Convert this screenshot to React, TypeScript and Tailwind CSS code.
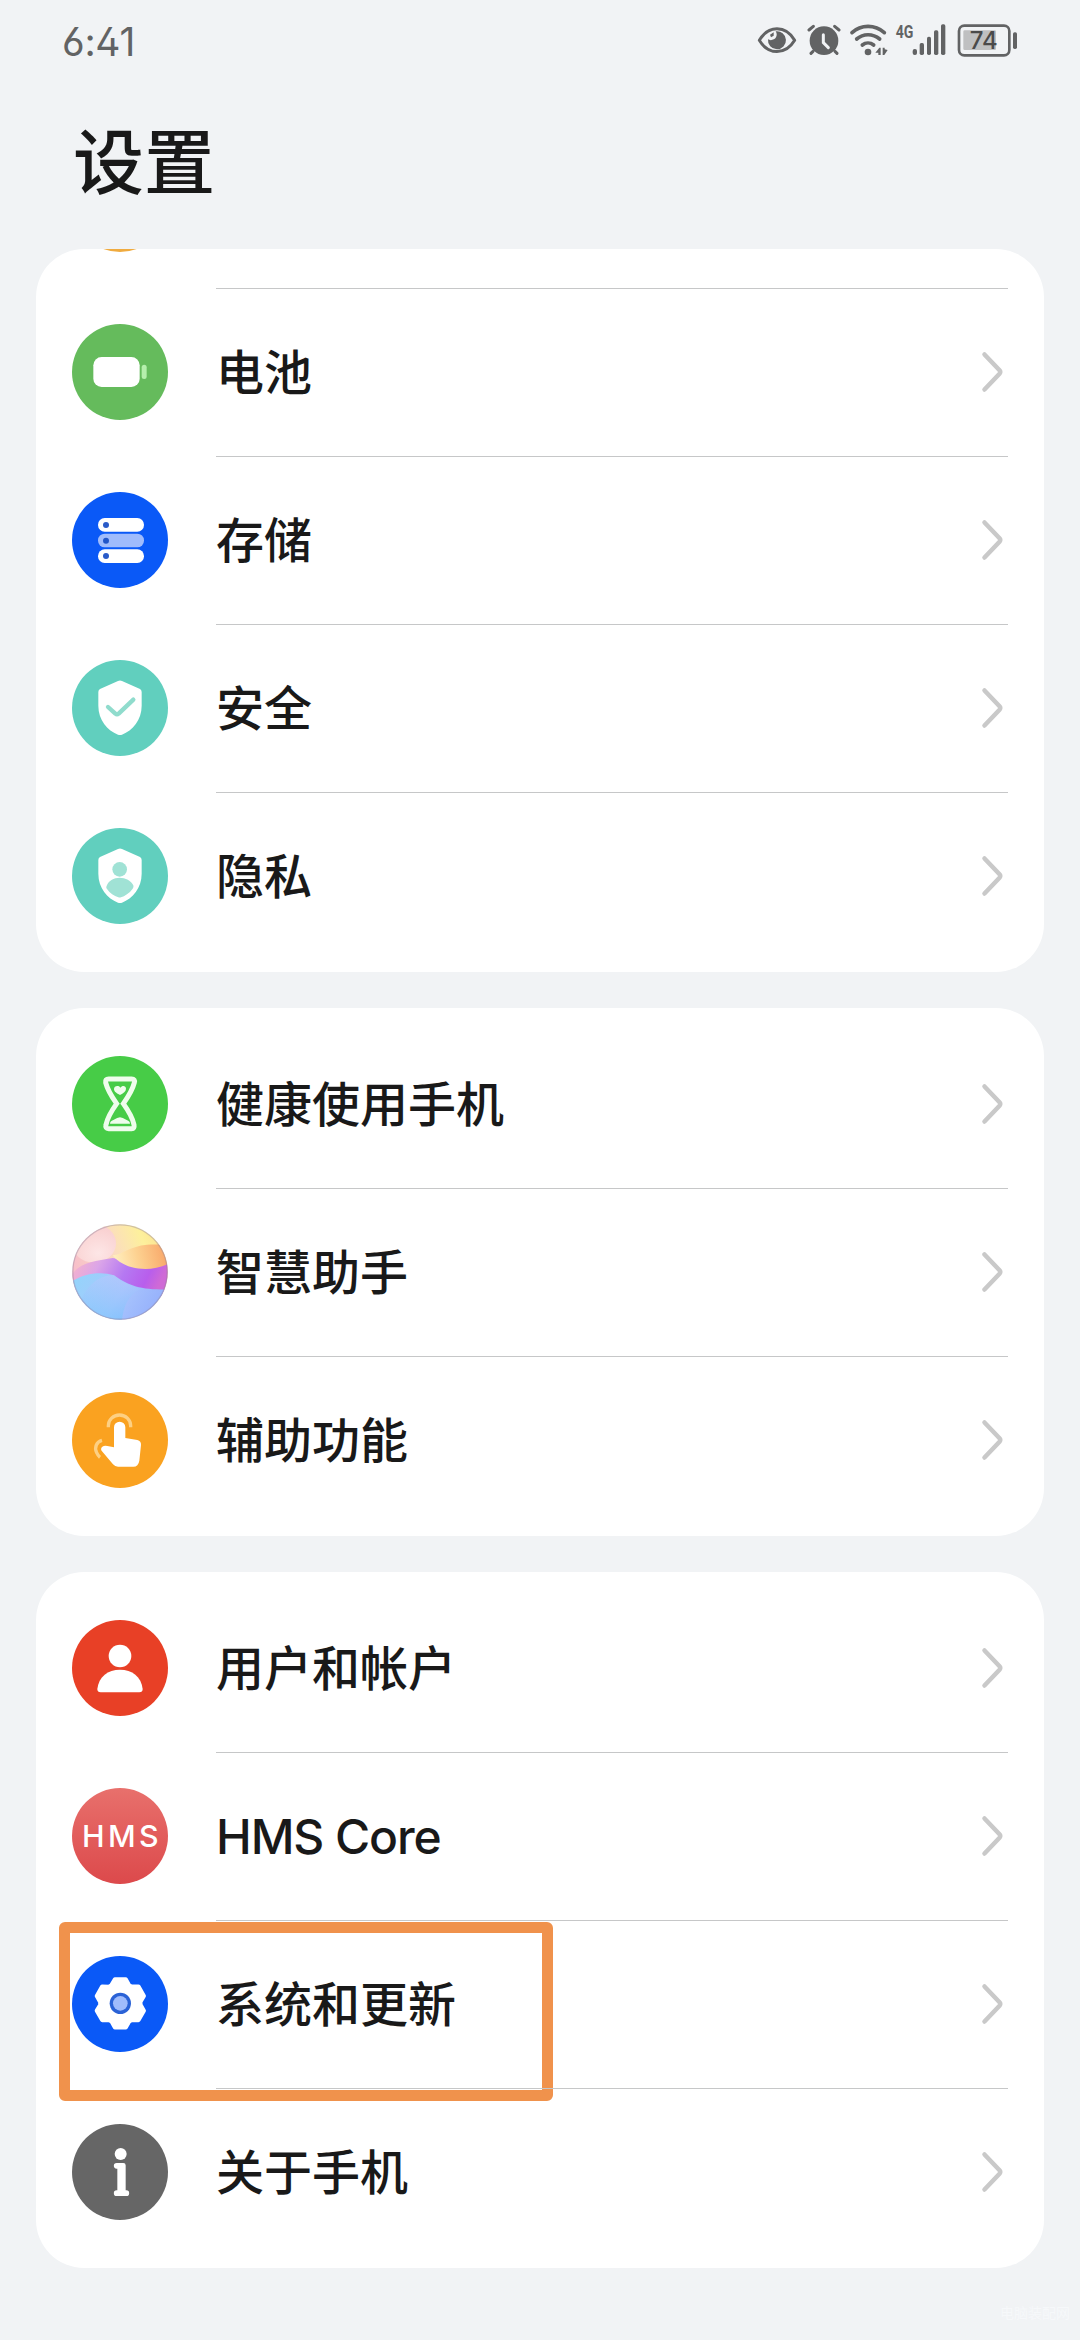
import React, { FC, ReactNode } from "react";

interface SettingItem {
  label: string;
  icon: ReactNode;
  highlight?: boolean;
}

const SHIELD =
  "M138 63 Q144 60 150 63 L204 87 Q209 90 209 96 V137 C209 180 182 211 150 224 Q144 226 138 224 C106 211 79 180 79 137 V96 Q79 90 84 87 Z";

const RoundIcon: FC<{ color: string; children?: ReactNode }> = ({
  color,
  children,
}) => (
  <svg viewBox="0 0 288 288" className="h-24 w-24 shrink-0">
    <circle cx="144" cy="144" r="144" fill={color} />
    {children}
  </svg>
);

const BatteryIcon = () => (
  <RoundIcon color="#65bb5c">
    <rect x="64" y="99" width="139" height="90" rx="25" fill="#fff" />
    <rect x="209" y="122" width="15" height="43" rx="7.5" fill="#b5efac" />
  </RoundIcon>
);

const StorageIcon = () => (
  <RoundIcon color="#0a59f7">
    <rect x="78" y="78" width="138" height="41" rx="20" fill="#fff" />
    <rect x="78" y="125" width="138" height="41" rx="20" fill="#a0bcfc" />
    <rect x="78" y="172" width="138" height="41" rx="20" fill="#fff" />
    <circle cx="102" cy="99" r="9" fill="#2a5bc8" />
    <circle cx="102" cy="146" r="9" fill="#2156c9" />
    <circle cx="102" cy="192" r="9" fill="#2a5bc8" />
  </RoundIcon>
);

const SecurityIcon = () => (
  <RoundIcon color="#61cfbe">
    <path d={SHIELD} fill="#fff" />
    <path
      d="M108 141 L130 161 Q135 165 140 161 L184 119"
      fill="none"
      stroke="#90dccd"
      strokeWidth="13"
      strokeLinecap="round"
      strokeLinejoin="round"
    />
  </RoundIcon>
);

const PrivacyIcon = () => (
  <RoundIcon color="#61cfbe">
    <path d={SHIELD} fill="#fff" />
    <circle cx="143" cy="124" r="22" fill="#a0e2d5" />
    <path
      d="M103 176 C108 158 126 149 143 149 S178 158 184 172 Q186 177 182 182 C172 196 158 204 147 208 Q143 209 139 208 C126 204 114 196 105 183 Q102 180 103 176 Z"
      fill="#a0e2d5"
    />
  </RoundIcon>
);

const HourglassIcon = () => (
  <RoundIcon color="#47cc47">
    <path
      d="M110 69 H179 Q190 69 187 80 C181 104 169 122 154 143 C169 164 181 182 186 206 Q188 218 179 218 H110 Q99 218 102 206 C107 182 119 164 134 143 C119 122 107 104 101 80 Q99 69 110 69 Z"
      fill="none"
      stroke="#effdec"
      strokeWidth="15"
    />
    <path
      d="M144 117 C134 112 126 107 126 99 C126 90 139 87 145 95 C151 87 162 89 162 98 C162 106 154 112 144 117 Z"
      fill="#effdec"
    />
    <path
      d="M114 203 Q114 196 124 192 Q137 184 144 184 T164 192 Q174 196 174 203 Z"
      fill="#effdec"
    />
  </RoundIcon>
);

const AssistantIcon = () => (
  <svg viewBox="0 0 288 288" className="h-24 w-24 shrink-0">
    <defs>
      <clipPath id="orb">
        <circle cx="144" cy="144" r="143" />
      </clipPath>
      <linearGradient id="orbTop" x1="0" y1="0.5" x2="1" y2="0.1">
        <stop offset="0" stopColor="#f7bccb" />
        <stop offset="0.45" stopColor="#fbdcc0" />
        <stop offset="0.75" stopColor="#fdf09c" />
        <stop offset="1" stopColor="#fbdb8c" />
      </linearGradient>
      <radialGradient id="orbPink" cx="0.6" cy="0.75" r="0.7">
        <stop offset="0" stopColor="#fde6e6" />
        <stop offset="1" stopColor="#f9cfcf" />
      </radialGradient>
      <linearGradient id="orbOrange" x1="0" y1="0.5" x2="1" y2="0.4">
        <stop offset="0" stopColor="#fff0c0" />
        <stop offset="0.45" stopColor="#fdd190" />
        <stop offset="1" stopColor="#f8a567" />
      </linearGradient>
      <linearGradient id="orbBand" x1="0" y1="0" x2="1" y2="0.2">
        <stop offset="0" stopColor="#f9b4c8" />
        <stop offset="0.3" stopColor="#dba5e8" />
        <stop offset="0.6" stopColor="#b578f2" />
        <stop offset="0.85" stopColor="#b85eec" />
        <stop offset="1" stopColor="#cf6ad6" />
      </linearGradient>
      <linearGradient id="orbBlue" x1="0" y1="0.3" x2="1" y2="0.6">
        <stop offset="0" stopColor="#96d3fb" />
        <stop offset="0.5" stopColor="#a9c6fd" />
        <stop offset="1" stopColor="#93adfc" />
      </linearGradient>
      <linearGradient id="orbFade" x1="0" y1="0" x2="0" y2="1">
        <stop offset="0" stopColor="#c3c4fd" stopOpacity="0.7" />
        <stop offset="1" stopColor="#66c8fd" stopOpacity="0.8" />
      </linearGradient>
    </defs>
    <g clipPath="url(#orb)">
      <rect width="288" height="288" fill="url(#orbTop)" />
      <ellipse cx="66" cy="58" rx="66" ry="58" fill="url(#orbPink)" />
      <path
        d="M0 150 C30 112 70 112 122 102 C170 108 220 132 288 116 V220 H0 Z"
        fill="url(#orbBand)"
      />
      <path
        d="M122 94 C150 92 175 66 225 62 C255 60 275 62 288 66 V120 C250 138 210 138 180 130 C150 122 130 106 122 94 Z"
        fill="url(#orbOrange)"
      />
      <path
        d="M0 172 C40 146 90 142 126 154 C165 182 205 200 288 196 V288 H0 Z"
        fill="url(#orbBlue)"
      />
      <path
        d="M126 154 C150 176 180 190 206 194 C165 215 155 250 150 288 H20 C10 230 60 150 126 154 Z"
        fill="url(#orbFade)"
        opacity="0.55"
      />
    </g>
    <circle
      cx="144"
      cy="144"
      r="141.5"
      fill="none"
      stroke="#8f7f9a"
      strokeOpacity="0.4"
      strokeWidth="4"
    />
  </svg>
);

const TouchIcon = () => (
  <RoundIcon color="#faa220">
    <path
      d="M126 106 A17 17 0 0 1 160 106 V138 L196 144 Q208 147 207 159 L202 206 Q199 224 184 224 H138 Q129 224 123 217 L90 178 Q84 170 91 164 Q97 160 106 162 L126 166 Z"
      fill="#fff"
    />
    <path
      d="M109 106 V101 A33.5 32 0 0 1 176 101 V106"
      fill="none"
      stroke="#fdd083"
      strokeWidth="10"
    />
    <path
      d="M90 145 C74 149 66 166 74 182 C77 189 80 193 84 196"
      fill="none"
      stroke="#fdd083"
      strokeWidth="10"
    />
  </RoundIcon>
);

const UserIcon = () => (
  <RoundIcon color="#e84026">
    <circle cx="144" cy="108" r="34" fill="#fff" />
    <path
      d="M76 207 C80 170 108 149 144 149 S208 170 212 207 Q212 217 202 217 H86 Q76 217 76 207 Z"
      fill="#fff"
    />
  </RoundIcon>
);

const HmsIcon = () => (
  <RoundIcon color="url(#hms)">
    <defs>
      <linearGradient id="hms" x1="0" y1="0" x2="0" y2="1">
        <stop offset="0" stopColor="#e8706c" />
        <stop offset="1" stopColor="#dc494b" />
      </linearGradient>
    </defs>
    <text
      x="30"
      y="178"
      textLength="230"
      fontSize="91"
      fontWeight="500"
      fill="#fff"
      className="font-['Inter',sans-serif]"
    >
      HMS
    </text>
  </RoundIcon>
);

const gearPoints = Array.from({ length: 6 })
  .flatMap((_, i) => {
    const a = (i * Math.PI) / 3;
    return [
      [-16, -72],
      [16, -72],
      [26, -54],
      [34, -50],
    ].map(
      ([x, y]) =>
        `${(x * Math.cos(a) - y * Math.sin(a)).toFixed(1)},${(
          x * Math.sin(a) +
          y * Math.cos(a)
        ).toFixed(1)}`
    );
  })
  .join(" ");

const SystemIcon = () => (
  <RoundIcon color="#0a59f7">
    <g transform="translate(145 142)">
      <polygon
        points={gearPoints}
        fill="#fff"
        stroke="#fff"
        strokeWidth="13"
        strokeLinejoin="round"
      />
      <circle r="32" fill="#2a62d6" />
      <circle r="22" fill="#a0bcfc" />
    </g>
  </RoundIcon>
);

const InfoIcon = () => (
  <RoundIcon color="#666666">
    <circle cx="146" cy="90" r="18" fill="#fff" />
    <path
      d="M134 117 H154 Q161 117 161 124 V199 H163 A8.5 8.5 0 0 1 163 216 H134 A8.5 8.5 0 0 1 134 199 H136 V134 H134 A8.5 8.5 0 0 1 134 117 Z"
      fill="#fff"
    />
  </RoundIcon>
);

const groups: SettingItem[][] = [
  [
    { label: "电池", icon: <BatteryIcon /> },
    { label: "存储", icon: <StorageIcon /> },
    { label: "安全", icon: <SecurityIcon /> },
    { label: "隐私", icon: <PrivacyIcon /> },
  ],
  [
    { label: "健康使用手机", icon: <HourglassIcon /> },
    { label: "智慧助手", icon: <AssistantIcon /> },
    { label: "辅助功能", icon: <TouchIcon /> },
  ],
  [
    { label: "用户和帐户", icon: <UserIcon /> },
    { label: "HMS Core", icon: <HmsIcon /> },
    { label: "系统和更新", icon: <SystemIcon />, highlight: true },
    { label: "关于手机", icon: <InfoIcon /> },
  ],
];

const StatusBar = () => (
  <header className="flex h-20 items-center justify-between pl-[62px] pr-[61px] text-[#626364]">
    <span className="pt-[3px] font-['Inter',sans-serif] text-[39px] leading-none tracking-[-0.3px] [font-feature-settings:'ss01']">
      6:41
    </span>
    <div className="flex">
      <svg viewBox="48 39 120 102" className="h-[34px] w-10">
        <path
          d="M55 91 C82 45 134 45 161 91 C134 136 82 136 55 91 Z"
          fill="none"
          stroke="currentColor"
          strokeWidth="9"
          strokeLinejoin="round"
        />
        <path
          d="M104 64 A27 27 0 1 1 81 88 C88 93 101 90 105 82 C108 76 108 70 104 64 Z"
          fill="currentColor"
        />
        <path d="M87 74 L98 67 L98 77 L90 82 Z" fill="currentColor" />
      </svg>
      <svg viewBox="198 39 102 102" className="ml-2.5 h-[34px] w-[34px]">
        <circle cx="249" cy="92" r="43" fill="currentColor" />
        <path
          d="M204 60 L217 49 M281 49 L294 60 M216 124 L210 130 M282 124 L288 130"
          stroke="currentColor"
          strokeWidth="9"
          strokeLinecap="round"
        />
        <path
          d="M247 74 V98 L262 113"
          fill="none"
          stroke="#f1f3f5"
          strokeWidth="9"
          strokeLinecap="round"
        />
      </svg>
      <svg viewBox="324 39 120 102" className="ml-2 h-[34px] w-10">
        <g
          fill="none"
          stroke="currentColor"
          strokeWidth="11"
          strokeLinecap="round"
        >
          <path d="M333 68 C360 43 402 43 430 68" />
          <path d="M347 87 C367 70 395 70 416 87" />
          <path d="M364 105 C374 97 388 97 398 105" />
        </g>
        <circle cx="381" cy="126" r="10" fill="currentColor" />
        <path
          d="M403 128 L415 113 H419 V135 H412 V128 Z M425 113 H431 V118 L440 120 L430 135 H425 Z"
          fill="currentColor"
        />
      </svg>
      <svg
        viewBox="462 39 156 102"
        className="ml-1.5 h-[34px] w-[52px] overflow-visible"
      >
        <text
          x="464"
          y="84"
          fontSize="54"
          fontWeight="700"
          textLength="53"
          lengthAdjust="spacingAndGlyphs"
          fill="currentColor"
          className="font-['Roboto',sans-serif]"
        >
          4G
        </text>
        <g fill="currentColor">
          <rect x="515" y="117" width="13" height="18" rx="6" />
          <rect x="536" y="99" width="13" height="36" rx="5" />
          <rect x="558" y="80" width="12" height="55" rx="5" />
          <rect x="579" y="61" width="13" height="74" rx="5" />
          <rect x="600" y="43" width="13" height="92" rx="5" />
        </g>
      </svg>
      <svg
        viewBox="648 39 186 102"
        className="ml-2.5 h-[34px] w-[62px] overflow-visible"
      >
        <rect
          x="654"
          y="47"
          width="151"
          height="89"
          rx="16"
          fill="none"
          stroke="currentColor"
          strokeWidth="8"
        />
        <rect x="667" y="61" width="98" height="59" rx="4" fill="#bfc0c1" />
        <rect x="816" y="67" width="12" height="50" rx="5" fill="currentColor" />
        <text
          x="686"
          y="117"
          fontSize="73"
          fontWeight="500"
          textLength="84"
          lengthAdjust="spacingAndGlyphs"
          fill="#4a4a4a"
          className="font-['Inter',sans-serif]"
        >
          74
        </text>
      </svg>
    </div>
  </header>
);

const SettingRow: FC<{ item: SettingItem; divider: boolean }> = ({
  item,
  divider,
}) => (
  <li className="relative flex h-[168px] items-center gap-12 px-9">
    {item.icon}
    <div
      className={
        divider
          ? "flex h-full flex-1 items-center justify-between shadow-[inset_0_1px_0_#c6c7c8]"
          : "flex h-full flex-1 items-center justify-between"
      }
    >
      <span className="pt-[2px] text-[48px] font-medium leading-none text-[#191919]">
        {item.label === "HMS Core" ? (
          <span className="tracking-[-1.1px]">{item.label}</span>
        ) : (
          item.label
        )}
      </span>
      <svg viewBox="0 0 28 44" className="h-11 w-7">
        <path
          d="M4.5 4.5 L19.5 20.2 Q21 22 19.5 23.8 L4.5 39.5"
          fill="none"
          stroke="#c9c9c9"
          strokeWidth="4.5"
          strokeLinecap="round"
        />
      </svg>
    </div>
    {item.highlight && (
      <div className="absolute left-[23px] top-[2px] h-[179px] w-[494px] rounded-md border-[11.5px] border-[#f0924c]" />
    )}
  </li>
);

export default function App() {
  return (
    <div className="relative h-[2340px] w-[1080px] overflow-hidden bg-[#f1f3f5] font-['Inter','Noto_Sans_CJK_SC',sans-serif]">
      <StatusBar />
      <h1 className="flex h-[169px] items-center pb-1 pl-[73px] text-[71px] font-medium leading-none text-[#191919]">
        设置
      </h1>
      <main className="flex flex-col gap-9 px-9">
        {groups.map((items, i) => (
          <ul
            key={i}
            className={
              i === 0
                ? "overflow-hidden rounded-[48px] bg-white pb-3"
                : "rounded-[48px] bg-white py-3"
            }
          >
            {i === 0 && (
              <li className="flex h-[39px] items-end px-9 pb-9">
                <RoundIcon color="#f0ab3f" />
              </li>
            )}
            {items.map((item, index) => (
              <SettingRow
                key={item.label}
                item={item}
                divider={i === 0 || index > 0}
              />
            ))}
          </ul>
        ))}
      </main>
      <span className="absolute bottom-5 right-2.5 text-[14px] leading-none text-[#f6f8fa]">
        电脑装配网
      </span>
    </div>
  );
}
